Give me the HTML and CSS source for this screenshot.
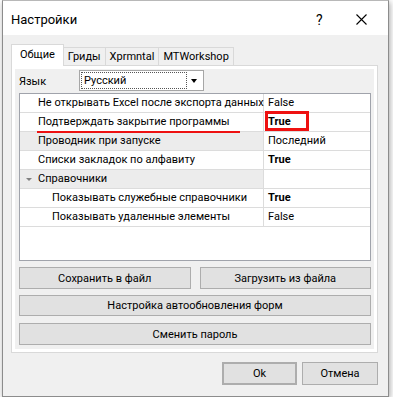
FILE: index.html
```html
<!DOCTYPE html>
<html lang="ru">
<head>
  <meta charset="UTF-8">
  <meta name="viewport" content="width=device-width, initial-scale=1.0">
  <title>Настройки</title>
  <link rel="stylesheet" href="styles.css">
</head>
<body>
  <div class="window">
    <div class="titlebar">
      <span class="title">Настройки</span>
      <span class="help">?</span>
      <span class="close">
        <svg width="11" height="11" viewBox="0 0 11 11"><path d="M0.5 0.5 L10.5 10.5 M10.5 0.5 L0.5 10.5" stroke="#000" stroke-width="1.1" fill="none"/></svg>
      </span>
    </div>

    <div class="client">
      <!-- вкладки -->
      <div class="tabs">
        <div class="tab active">Общие</div>
        <div class="tab">Гриды</div>
        <div class="tab">Xprmntal</div>
        <div class="tab">MTWorkshop</div>
      </div>

      <div class="page">
        <div class="lang-row">
          <span class="lang-label">Язык</span>
          <div class="combo">
            <span class="combo-text">Русский</span>
            <span class="combo-arrow"></span>
          </div>
        </div>

        <div class="grid">
          <div class="row">
            <div class="name">Не открывать Excel после экспорта данных</div>
            <div class="value">False</div>
          </div>
          <div class="row">
            <div class="name">Подтверждать закрытие программы<span class="mark-line"></span></div>
            <div class="value bold">True<span class="mark-box"></span></div>
          </div>
          <div class="row selected">
            <div class="name">Проводник при запуске</div>
            <div class="value">Последний</div>
          </div>
          <div class="row">
            <div class="name">Списки закладок по алфавиту</div>
            <div class="value bold">True</div>
          </div>
          <div class="row category">
            <div class="name"><span class="expander"></span>Справочники</div>
            <div class="value"></div>
          </div>
          <div class="row child">
            <div class="name">Показывать служебные справочники</div>
            <div class="value bold">True</div>
          </div>
          <div class="row child">
            <div class="name">Показывать удаленные элементы</div>
            <div class="value">False</div>
          </div>
        </div>

        <div class="btn-pair">
          <button class="btn">Сохранить в файл</button>
          <button class="btn">Загрузить из файла</button>
        </div>
        <button class="btn wide">Настройка автообновления форм</button>
        <button class="btn wide last">Сменить пароль</button>
      </div>

      <div class="dialog-buttons">
        <button class="btn default">Ok</button>
        <button class="btn cancel">Отмена</button>
      </div>
    </div>
  </div>
</body>
</html>
```

FILE: styles.css
```css
body {
  margin: 0;
  background-color: #ffffff;
  font-family: Roboto, "Noto Sans", sans-serif;
  font-size: 11px;
  color: #000;
}
.window {
  margin-left: 2px;
  width: 387px;
  height: 397px;
  box-sizing: border-box;
  border: 1px solid #8c8c8c;
  border-top-color: #b8b8b8;
  background-color: #f0f0f0;
  box-shadow: 1px 2px 6px rgba(0, 0, 0, 0.35);
  display: flex;
  flex-direction: column;
}
.titlebar {
  height: 34px;
  background-color: #ffffff;
  display: flex;
  align-items: center;
  padding-top: 3px;
  box-sizing: border-box;
}
.title {
  font-size: 13px;
  padding-left: 8px;
  flex: 1;
}
.help {
  font-size: 14px;
  width: 40px;
}
.close {
  width: 32px;
  display: flex;
}
.client {
  flex: 1;
  padding: 9px 10px 0 8px;
  display: flex;
  flex-direction: column;
}
.tabs {
  display: flex;
  align-items: flex-end;
  height: 21px;
}
.tab {
  height: 18px;
  box-sizing: border-box;
  border: 1px solid #d9d9d9;
  border-bottom: none;
  margin-left: -1px;
  padding: 0 4px;
  line-height: 17px;
  background-color: #f0f0f0;
}
.tab.active {
  height: 22px;
  margin-left: 0;
  margin-bottom: -1px;
  background-color: #ffffff;
  padding: 0 8px;
  line-height: 20px;
  position: relative;
  z-index: 1;
}
.page {
  border: 1px solid #d9d9d9;
  box-shadow: inset 0 0 0 3px #ffffff;
  padding: 4px 6px 7px 7px;
  display: flex;
  flex-direction: column;
}
.lang-row {
  display: flex;
  align-items: center;
  height: 21px;
}
.lang-label {
  width: 60px;
  padding-top: 2px;
}
.combo {
  width: 125px;
  height: 21px;
  box-sizing: border-box;
  border: 1px solid #a6a6a6;
  background-color: #ffffff;
  display: flex;
  align-items: center;
  padding: 1px;
}
.combo-text {
  flex: 1;
  height: 17px;
  line-height: 15px;
  box-sizing: border-box;
  border: 1px dotted #555;
  padding-left: 2px;
  margin-right: 4px;
}
.combo-arrow {
  width: 0;
  height: 0;
  border-left: 3.5px solid transparent;
  border-right: 3.5px solid transparent;
  border-top: 4px solid #000;
  margin-right: 5px;
}
.grid {
  margin-top: 2px;
  height: 168px;
  box-sizing: border-box;
  border: 1px solid #a0a3ab;
  background-color: #ffffff;
}
.row {
  display: flex;
  height: 19px;
  box-sizing: border-box;
  border-bottom: 1px solid #dcdcdc;
}
.name {
  width: 244px;
  box-sizing: border-box;
  border-right: 1px solid #dcdcdc;
  padding-left: 18px;
  line-height: 18px;
  white-space: nowrap;
  position: relative;
}
.value {
  flex: 1;
  padding-left: 4px;
  line-height: 18px;
  position: relative;
}
.bold {
  font-weight: bold;
}
.row.selected .name,
.row.category .name {
  background-color: #ececec;
}
.row.child .name {
  padding-left: 32px;
}
.expander {
  position: absolute;
  left: 6px;
  top: 8px;
  width: 0;
  height: 0;
  border-left: 3px solid transparent;
  border-right: 3px solid transparent;
  border-top: 3px solid #808080;
}
.mark-line {
  position: absolute;
  left: 17px;
  bottom: -2px;
  width: 203px;
  height: 2px;
  background-color: #ee1111;
  z-index: 2;
}
.mark-box {
  position: absolute;
  left: 1px;
  top: -2px;
  width: 44px;
  height: 20px;
  box-sizing: border-box;
  border: 3px solid #ee1111;
}
.btn {
  font-family: inherit;
  font-size: 11px;
  color: #000;
  background-color: #e1e1e1;
  border: 1px solid #adadad;
  height: 22px;
  padding: 0;
  margin: 0;
}
.btn-pair {
  display: grid;
  grid-template-columns: 1fr 1fr;
  gap: 9px;
  margin-top: 6px;
}
.btn.wide {
  margin-top: 6px;
  width: 100%;
  height: 21px;
}
.btn.wide.last {
  margin-top: 7px;
  height: 22px;
}
.dialog-buttons {
  display: flex;
  justify-content: flex-end;
  gap: 5px;
  margin-top: 9px;
}
.btn.default {
  width: 75px;
  height: 23px;
  border: 2px solid #adadad;
}
.btn.cancel {
  width: 76px;
  height: 23px;
}
```
